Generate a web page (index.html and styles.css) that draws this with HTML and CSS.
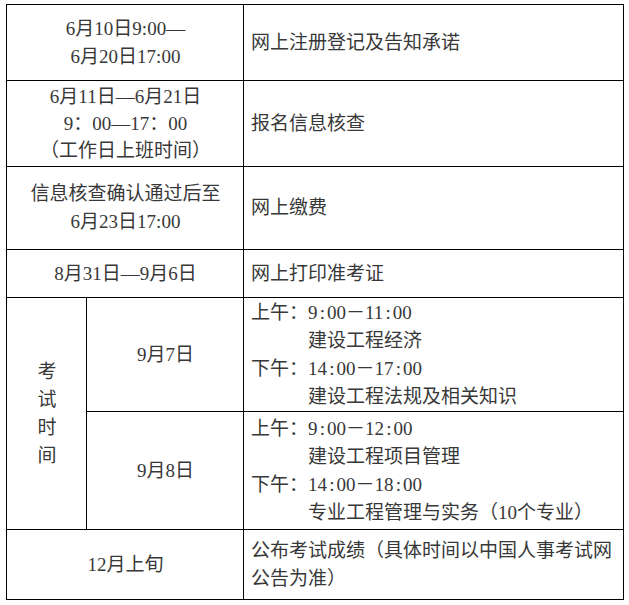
FILE: index.html
```html
<!DOCTYPE html>
<html lang="zh-CN">
<head>
<meta charset="utf-8">
<title>考试时间安排</title>
<link rel="stylesheet" href="styles.css">
</head>
<body>
<table class="schedule">
  <colgroup>
    <col class="c-a">
    <col class="c-b">
    <col class="c-c">
  </colgroup>
  <tbody>
    <tr class="r1">
      <td colspan="2" class="center">6月10日9:00—<br>6月20日17:00</td>
      <td class="left">网上注册登记及告知承诺</td>
    </tr>
    <tr class="r2">
      <td colspan="2" class="center tight">6月11日—6月21日<br>9：00—17：00<br>（工作日上班时间）</td>
      <td class="left">报名信息核查</td>
    </tr>
    <tr class="r3">
      <td colspan="2" class="center">信息核查确认通过后至<br>6月23日17:00</td>
      <td class="left">网上缴费</td>
    </tr>
    <tr class="r4">
      <td colspan="2" class="center">8月31日—9月6日</td>
      <td class="left">网上打印准考证</td>
    </tr>
    <tr class="r5">
      <td rowspan="2" class="center">考<br>试<br>时<br>间</td>
      <td class="center">9月7日</td>
      <td class="left">
        <div class="line">上午：9<span class="colon">:</span>00－11<span class="colon">:</span>00</div>
        <div class="line indent">建设工程经济</div>
        <div class="line">下午：14<span class="colon">:</span>00－17<span class="colon">:</span>00</div>
        <div class="line indent">建设工程法规及相关知识</div>
      </td>
    </tr>
    <tr class="r6">
      <td class="center">9月8日</td>
      <td class="left">
        <div class="line">上午：9<span class="colon">:</span>00－12<span class="colon">:</span>00</div>
        <div class="line indent">建设工程项目管理</div>
        <div class="line">下午：14<span class="colon">:</span>00－18<span class="colon">:</span>00</div>
        <div class="line indent">专业工程管理与实务（10个专业）</div>
      </td>
    </tr>
    <tr class="r7">
      <td colspan="2" class="center">12月上旬</td>
      <td class="left">公布考试成绩（具体时间以中国人事考试网公告为准）</td>
    </tr>
  </tbody>
</table>
</body>
</html>
```

FILE: styles.css
```css
html, body {
  margin: 0;
  padding: 0;
  background: #ffffff;
}

body {
  font-family: "Liberation Serif", "Noto Sans CJK SC", serif;
  font-size: 19px;
  line-height: 28px;
  color: #383838;
}

.schedule {
  margin: 4px 0 0 6px;
  width: 617px;
  border-collapse: collapse;
  table-layout: fixed;
}

.c-a { width: 80px; }
.c-b { width: 157px; }
.c-c { width: 380px; }

.schedule td {
  border: 1px solid #000000;
  padding: 0 6px 0 7px;
  vertical-align: middle;
}

.center {
  text-align: center;
}

.left {
  text-align: left;
}

.tight {
  line-height: 27px;
}

.indent {
  padding-left: 57px;
}

.colon {
  display: inline-block;
  width: 9.5px;
  text-align: center;
}

.r1 td { height: 75px; }
.r2 td { height: 85px; }
.r3 td { height: 82px; }
.r4 td { height: 47px; }
.r5 td { height: 113px; }
.r6 td { height: 117px; }
.r7 td { height: 69px; }
```
